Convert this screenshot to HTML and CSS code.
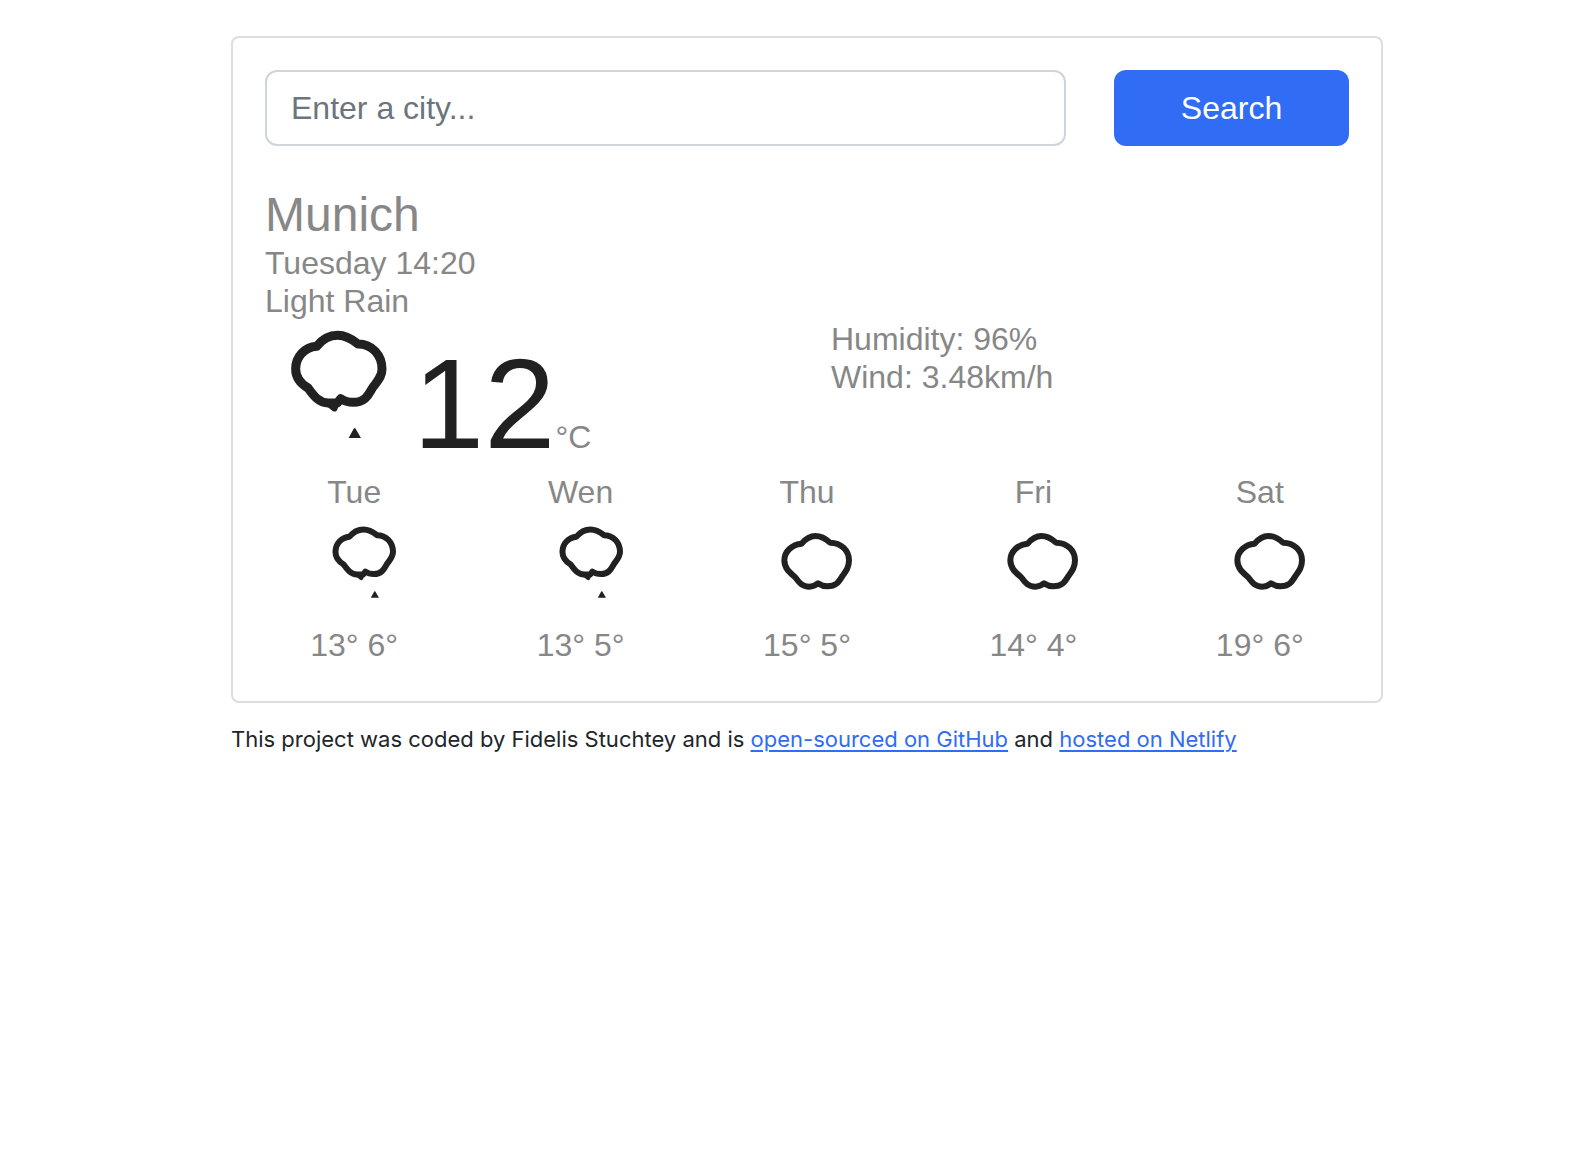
FILE: index.html
```html
<!DOCTYPE html>
<html lang="en">
<head>
<meta charset="utf-8">
<meta name="viewport" content="width=device-width, initial-scale=1">
<title>Weather</title>
<link rel="stylesheet" href="styles.css">
</head>
<body>
<svg class="sprite" aria-hidden="true">
  <symbol id="rain" viewBox="0 0 360 390">
    <path class="outline" d="M110 79C128 57 150 46 173 46C196 46 213 55 234 72C276 72 306 105 306 147C306 171 292 183 280 200C268 216 262 246 220 247C205 247 192 243 182 236L172 249L145 249C115 248 100 226 84 204C60 190 47 172 47 147C47 110 74 82 110 79Z"/>
    <path class="solid" d="M138 257L158 273Q164 277 170 272L182 246ZM219 330Q224 318 229 330L243 354H206Z"/>
  </symbol>
  <symbol id="cloud" viewBox="24 0 240 261">
    <path class="outline thin" d="M95 74C108 58 121 51 136 51C154 51 166 58 180 71C214 71 237 95 237 124C237 144 229 155 218 170C206 190 198 202 172 202C160 202 152 198 144 193C137 199 129 203 118 203C95 203 87 190 75 174C56 158 44 148 43 124C43 98 66 76 95 74Z"/>
  </symbol>
</svg>
<div class="container">
  <main class="card">
    <form class="search">
      <input class="search-input" type="search" placeholder="Enter a city..." aria-label="City">
      <button class="search-button" type="submit">Search</button>
    </form>
    <h1 class="city">Munich</h1>
    <ul class="details">
      <li>Tuesday 14:20</li>
      <li>Light Rain</li>
    </ul>
    <div class="current">
      <div class="temperature">
        <svg class="icon-large" role="img" aria-label="Light rain"><use href="#rain"/></svg>
        <span class="degrees">12</span><span class="unit">°C</span>
      </div>
      <ul class="details">
        <li>Humidity: 96%</li>
        <li>Wind: 3.48km/h</li>
      </ul>
    </div>
    <div class="forecast">
      <div class="day"><div>Tue</div><svg class="icon" role="img" aria-label="Rain"><use href="#rain"/></svg><div>13° 6°</div></div>
      <div class="day"><div>Wen</div><svg class="icon" role="img" aria-label="Rain"><use href="#rain"/></svg><div>13° 5°</div></div>
      <div class="day"><div>Thu</div><svg class="icon" role="img" aria-label="Cloudy"><use href="#cloud"/></svg><div>15° 5°</div></div>
      <div class="day"><div>Fri</div><svg class="icon" role="img" aria-label="Cloudy"><use href="#cloud"/></svg><div>14° 4°</div></div>
      <div class="day"><div>Sat</div><svg class="icon" role="img" aria-label="Cloudy"><use href="#cloud"/></svg><div>19° 6°</div></div>
    </div>
  </main>
  <footer class="credit">This project was coded by Fidelis Stuchtey and is <a href="#github">open-sourced on GitHub</a> and <a href="#netlify">hosted on Netlify</a></footer>
</div>
</body>
</html>
```
FILE: styles.css
```css
* { box-sizing: border-box; }

body {
  margin: 0;
  padding: 36px 0 36px 24px;
  background: #fff;
  color: #212529;
  font-family: "Liberation Sans", Arial, sans-serif;
}

.sprite { position: absolute; width: 0; height: 0; }
.outline { fill: none; stroke: #212121; stroke-width: 27; stroke-linejoin: round; }
.thin { stroke-width: 18; }
.solid { fill: #212121; }

.container { max-width: 1152px; margin: 0 auto; }

.card {
  padding: 32px 32px 37px;
  border: 2px solid #dcdce1;
  border-radius: 8px;
  color: #878787;
  font-size: 32px;
  line-height: 38px;
}

.search {
  display: grid;
  grid-template-columns: repeat(12, 1fr);
  column-gap: 48px;
  margin-bottom: 40px;
}

.search-input,
.search-button {
  min-width: 0;
  height: 76px;
  border-radius: 12px;
  font: inherit;
}

.search-input {
  grid-column: span 9;
  padding: 0 24px;
  border: 2px solid #ced4da;
  background: #fff;
  appearance: none;
}

.search-input::placeholder { color: #6c757d; opacity: 1; }

.search-button {
  grid-column: span 3;
  border: 0;
  background: #316cf4;
  color: #fff;
}

.city { margin: 0; font-size: 48px; font-weight: 400; line-height: 58px; }

.details { margin: 0; padding: 0; list-style: none; }

.current {
  display: grid;
  grid-template-columns: 1fr 1fr;
  column-gap: 48px;
}

.temperature { display: flex; align-items: baseline; height: 153px; }
.icon-large { align-self: flex-start; width: 120px; height: 130px; margin: 0 13px 0 15px; }
.degrees { color: #212121; font-size: 128px; line-height: 168px; }

.forecast {
  display: grid;
  grid-template-columns: repeat(5, 1fr);
  column-gap: 48px;
  text-align: center;
}

/* The artwork sits right of the column's centre. */
.icon {
  display: block;
  width: 102px;
  height: 87px;
  margin: 8px auto 20px;
  padding-left: 22px;
}

.credit {
  margin-top: 20px;
  font-family: Inter, sans-serif;
  font-size: 22px;
  line-height: 32px;
}

.credit a {
  color: #316cf4;
  text-decoration-thickness: 2px;
  text-underline-offset: 3px;
}
```
